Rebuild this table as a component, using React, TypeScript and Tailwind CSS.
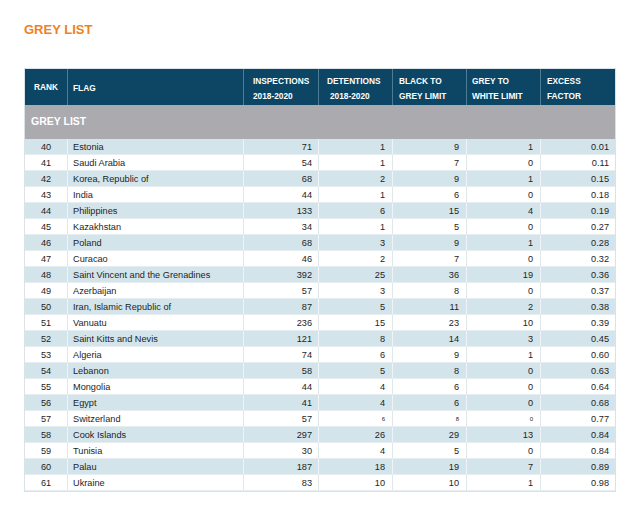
import React from "react";

const rows: [number, string, string, string, string, string, string][] = [
  [40, "Estonia", "71", "1", "9", "1", "0.01"],
  [41, "Saudi Arabia", "54", "1", "7", "0", "0.11"],
  [42, "Korea, Republic of", "68", "2", "9", "1", "0.15"],
  [43, "India", "44", "1", "6", "0", "0.18"],
  [44, "Philippines", "133", "6", "15", "4", "0.19"],
  [45, "Kazakhstan", "34", "1", "5", "0", "0.27"],
  [46, "Poland", "68", "3", "9", "1", "0.28"],
  [47, "Curacao", "46", "2", "7", "0", "0.32"],
  [48, "Saint Vincent and the Grenadines", "392", "25", "36", "19", "0.36"],
  [49, "Azerbaijan", "57", "3", "8", "0", "0.37"],
  [50, "Iran, Islamic Republic of", "87", "5", "11", "2", "0.38"],
  [51, "Vanuatu", "236", "15", "23", "10", "0.39"],
  [52, "Saint Kitts and Nevis", "121", "8", "14", "3", "0.45"],
  [53, "Algeria", "74", "6", "9", "1", "0.60"],
  [54, "Lebanon", "58", "5", "8", "0", "0.63"],
  [55, "Mongolia", "44", "4", "6", "0", "0.64"],
  [56, "Egypt", "41", "4", "6", "0", "0.68"],
  [57, "Switzerland", "57", "6", "8", "0", "0.77"],
  [58, "Cook Islands", "297", "26", "29", "13", "0.84"],
  [59, "Tunisia", "30", "4", "5", "0", "0.84"],
  [60, "Palau", "187", "18", "19", "7", "0.89"],
  [61, "Ukraine", "83", "10", "10", "1", "0.98"],
];

export default function App() {
  return (
    <div
      className="w-[630px] h-[510px] bg-white relative overflow-hidden"
      style={{ fontFamily: '"Liberation Sans", Arial, sans-serif' }}
    >
      <div className="pt-[22px] pl-[24px] text-[13px] leading-[16px] font-bold text-[#f08122]">
        GREY LIST
      </div>
      <div className="ml-[24px] mt-[30px] w-[592px] border border-[#d8e2e7]">
        {/* header */}
        <div className="flex h-[36px] bg-[#0d4664] text-white font-bold text-[8.3px] leading-[15px]">
          <div className="w-[43px] flex items-center justify-center border-r border-[#4d7c97]">RANK</div>
          <div className="w-[176px] flex items-center pl-[5px] border-r border-[#4d7c97] pt-[3px]">FLAG</div>
          <div className="w-[75px] flex flex-col justify-center pl-[9px] pt-[3px] border-r border-[#4d7c97]">
            <span>INSPECTIONS</span>
            <span>2018-2020</span>
          </div>
          <div className="w-[74px] flex flex-col justify-center pl-[8px] pt-[3px] border-r border-[#4d7c97]">
            <span>DETENTIONS</span>
            <span className="pl-[3px]">2018-2020</span>
          </div>
          <div className="w-[74px] flex flex-col justify-center pl-[6px] pt-[3px] border-r border-[#4d7c97]">
            <span>BLACK TO</span>
            <span>GREY LIMIT</span>
          </div>
          <div className="w-[74px] flex flex-col justify-center pl-[5px] pt-[3px] border-r border-[#4d7c97]">
            <span>GREY TO</span>
            <span>WHITE LIMIT</span>
          </div>
          <div className="flex-1 flex flex-col justify-center pl-[6px] pt-[3px]">
            <span>EXCESS</span>
            <span>FACTOR</span>
          </div>
        </div>
        {/* grey list bar */}
        <div className="h-[34px] bg-[#aaaaaf] flex items-center pl-[6px] text-white font-bold text-[10.5px]">
          GREY LIST
        </div>
        {rows.map((r, i) => {
          const stripe = i % 2 === 0;
          const small = r[0] === 57;
          const bg = stripe ? "bg-[#d3e4eb]" : "bg-white";
          const cellB = stripe ? "border-r border-[#eef4f7]" : "border-r border-[#dfe7eb]";
          return (
            <div
              key={r[0]}
              className={`flex h-[16px] text-[9.2px] leading-[17px] text-[#1e1e1e] ${bg} border-b border-[#e6eef2]`}
            >
              <div className={`w-[43px] text-center ${cellB}`}>{r[0]}</div>
              <div className={`w-[176px] pl-[5px] ${cellB} whitespace-nowrap`}>{r[1]}</div>
              <div className={`w-[75px] text-right pr-[6px] ${cellB}`}>{r[2]}</div>
              <div className={`w-[74px] text-right pr-[7px] ${cellB} ${small ? "text-[6px]" : ""}`}>{r[3]}</div>
              <div className={`w-[74px] text-right pr-[7px] ${cellB} ${small ? "text-[6px]" : ""}`}>{r[4]}</div>
              <div className={`w-[74px] text-right pr-[7px] ${cellB} ${small ? "text-[6px]" : ""}`}>{r[5]}</div>
              <div className="flex-1 text-right pr-[6px]">{r[6]}</div>
            </div>
          );
        })}
      </div>
    </div>
  );
}
